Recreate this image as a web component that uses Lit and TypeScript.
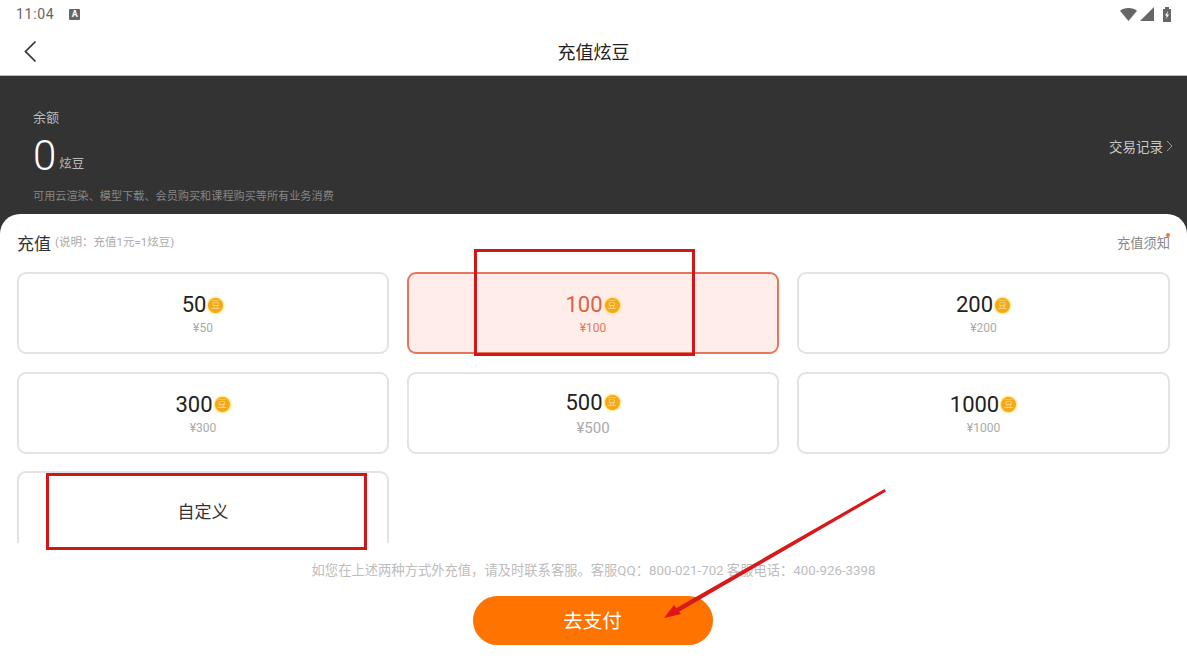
import { LitElement, html, css, svg } from 'lit';
import { customElement } from 'lit/decorators.js';

const PACKAGES = [
  { beans: '50', price: '¥50' },
  { beans: '100', price: '¥100', active: true },
  { beans: '200', price: '¥200' },
  { beans: '300', price: '¥300' },
  { beans: '500', price: '¥500', large: true },
  { beans: '1000', price: '¥1000' },
];

@customElement('app-root')
export class AppRoot extends LitElement {
  static styles = css`
    :host {
      display: block;
      position: relative;
      width: 1187px;
      height: 667px;
      overflow: hidden;
      background: #333;
      font-family: Roboto, 'Noto Sans CJK SC', sans-serif;
    }

    .top {
      height: 75px;
      background: #fff;
      border-bottom: 1px solid #bbb;
    }

    .status {
      height: 28px;
      display: flex;
      align-items: center;
      padding: 0 16px;
      color: #666;
      font-size: 14px;
      letter-spacing: 0.7px;
    }

    .status-a {
      width: 11px;
      height: 11px;
      margin-left: 15px;
      background: #666;
      border-radius: 1px;
      color: #fff;
      font-size: 9px;
      font-weight: 700;
      line-height: 11px;
      text-align: center;
      letter-spacing: 0;
    }

    .status-icons {
      margin-left: auto;
      display: flex;
      align-items: center;
      height: 15px;
      gap: 3px;
    }

    .nav {
      height: 47px;
      display: flex;
      align-items: center;
      justify-content: center;
      position: relative;
      font-size: 18px;
      color: #222;
      padding-bottom: 2px;
      box-sizing: border-box;
    }

    .back {
      position: absolute;
      left: 23px;
      top: 12px;
    }

    .balance {
      height: 138px;
      box-sizing: border-box;
      padding: 33px 14px 0 33px;
      display: flex;
      justify-content: space-between;
      color: #bbb;
    }

    .balance-label {
      font-size: 13px;
      line-height: 17px;
    }

    .balance-amount {
      display: flex;
      align-items: flex-end;
      gap: 3px;
      height: 44px;
      margin-top: 8px;
      font-size: 12.5px;
    }

    .balance-amount b {
      font-size: 42px;
      font-weight: 300;
      color: #fff;
      line-height: 44px;
    }

    .balance-amount span {
      line-height: 17px;
      margin-bottom: 6px;
    }

    .balance-note {
      margin-top: 12px;
      font-size: 11.15px;
      line-height: 14px;
      color: #858585;
    }

    .records {
      display: flex;
      align-items: center;
      gap: 3px;
      height: 16px;
      margin-top: 29px;
      font-size: 13.5px;
      color: #c8c8c8;
    }

    .sheet {
      height: 453px;
      box-sizing: border-box;
      background: #fff;
      border-radius: 20px 20px 0 0;
      padding: 17px 17px 0;
      display: flex;
      flex-direction: column;
    }

    .sheet-head {
      height: 22px;
      display: flex;
      align-items: center;
      color: #333;
      font-size: 17px;
    }

    .sheet-head small {
      margin-left: 4px;
      margin-top: -2px;
      font-size: 11.5px;
      color: #aaa;
    }

    .notice {
      margin-left: auto;
      margin-top: 1px;
      position: relative;
      font-size: 13.25px;
      color: #888;
    }

    .notice::after {
      content: '';
      position: absolute;
      right: 0;
      top: 0;
      width: 4px;
      height: 4px;
      border-radius: 50%;
      background: #f07a28;
    }

    .scroller {
      margin-top: 19px;
      height: 271px;
      overflow: hidden;
    }

    .grid {
      display: grid;
      grid-template-columns: 372px 372px 373px;
      grid-auto-rows: 82px;
      gap: 17.5px 18px;
    }

    .card {
      box-sizing: border-box;
      border: 2px solid #e3e3e3;
      border-radius: 9px;
      padding-top: 18px;
      display: flex;
      flex-direction: column;
      align-items: center;
      color: #222;
      background: #fff;
    }

    .card.active {
      background: #ffedea;
      border-color: #e6755c;
      color: #dc6247;
    }

    .beans {
      display: flex;
      align-items: center;
      height: 26px;
      font-size: 22px;
      line-height: 26px;
    }

    .coin {
      width: 15px;
      height: 15px;
      margin: 0 1px 0 2px;
      border-radius: 50%;
      background: #f5a81c;
      box-shadow: 0 0 2px 1px #ffdf5e;
      color: #ffdd8a;
      font-size: 9px;
      line-height: 15px;
      text-align: center;
    }

    .price {
      margin-top: 2px;
      font-size: 12px;
      line-height: 16px;
      color: #aaa;
    }

    .card.active .price {
      color: #e5785f;
    }

    .card.large {
      padding-top: 16px;
    }

    .card.large .price {
      margin-top: 3px;
      font-size: 15px;
      line-height: 18px;
    }

    .card.custom {
      padding: 0 0 3px;
      justify-content: center;
      font-size: 17px;
      color: #333;
    }

    .contact {
      margin-top: 19px;
      height: 17px;
      font-size: 13.3px;
      line-height: 17px;
      text-align: center;
      color: #bdbdbd;
    }

    .pay {
      align-self: center;
      width: 240px;
      height: 49px;
      margin: 17px 2px 0 0;
      padding: 0 0 2px;
      border: none;
      border-radius: 25px;
      background: #ff7300;
      color: #fff;
      font-family: inherit;
      font-size: 19.5px;
    }

    .marks {
      position: absolute;
      inset: 0;
      pointer-events: none;
    }
  `;

  private _coin() {
    return html`<span class="coin">豆</span>`;
  }

  private _statusIcons() {
    return html`
      <span class="status-icons">
        <svg width="17" height="13" viewBox="0 0 17 13"><path d="M0 2.800C2.200 1 5 0 8.500 0s6.300 1 8.500 2.800L8.500 13z" fill="#666" /></svg>
        <svg width="14" height="14" viewBox="0 0 14 14"><path d="M0 14 14 0v14z" fill="#666" /></svg>
        <svg width="8" height="15" viewBox="0 0 8 15" style="margin-left:6px">
          <path d="M0 2h2V0h4v2h2v13H0z" fill="#666" />
          <path d="M5 4 2 8.500h1.800L3 12l3-4.500H4.200z" fill="#fff" />
        </svg>
      </span>
    `;
  }

  private _marks() {
    return svg`
      <rect x="475.500" y="250.500" width="218" height="104" fill="none" stroke="#d01616" stroke-width="3" />
      <rect x="47.500" y="474.500" width="318" height="74" fill="none" stroke="#d01616" stroke-width="3" />
      <path d="M884.500 489 886 491.500 678.500 612 676.500 608z" fill="#d8181a" />
      <path d="M664 618 674 605 681 614z" fill="#e01518" />
    `;
  }

  render() {
    return html`
      <div class="top">
        <div class="status">
          11:04<span class="status-a">A</span>
          ${this._statusIcons()}
        </div>
        <div class="nav">
          <svg class="back" width="14" height="23" viewBox="0 0 14 23">
            <path d="M12.500 1.500 2.500 11.500l10 10" fill="none" stroke="#333" stroke-width="1.700" />
          </svg>
          充值炫豆
        </div>
      </div>

      <div class="balance">
        <div>
          <div class="balance-label">余额</div>
          <div class="balance-amount"><b>0</b><span>炫豆</span></div>
          <div class="balance-note">可用云渲染、模型下载、会员购买和课程购买等所有业务消费</div>
        </div>
        <div class="records">
          交易记录
          <svg width="7" height="12" viewBox="0 0 7 12">
            <path d="M1 1l5 5-5 5" fill="none" stroke="#999" stroke-width="1" />
          </svg>
        </div>
      </div>

      <div class="sheet">
        <div class="sheet-head">
          充值<small>(说明：充值1元=1炫豆)</small>
          <span class="notice">充值须知</span>
        </div>
        <div class="scroller">
          <div class="grid">
            ${PACKAGES.map(
              (p) => html`
                <div class="card ${p.active ? 'active' : ''} ${p.large ? 'large' : ''}">
                  <div class="beans">${p.beans}${this._coin()}</div>
                  <div class="price">${p.price}</div>
                </div>
              `
            )}
            <div class="card custom">自定义</div>
          </div>
        </div>
        <div class="contact">如您在上述两种方式外充值，请及时联系客服。客服QQ：800-021-702 客服电话：400-926-3398</div>
        <button class="pay">去支付</button>
      </div>

      <svg class="marks" width="1187" height="667">${this._marks()}</svg>
    `;
  }
}
